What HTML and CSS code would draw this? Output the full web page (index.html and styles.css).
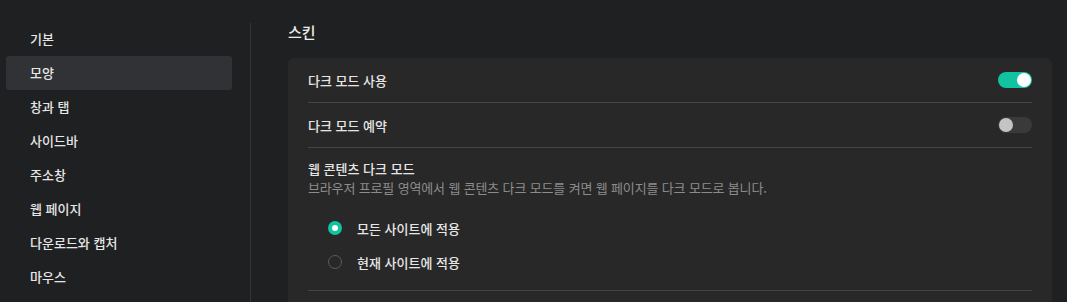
FILE: index.html
```html
<!DOCTYPE html>
<html lang="ko">
<head>
<meta charset="utf-8">
<link rel="stylesheet" href="styles.css">
</head>
<body>
<div class="app">
  <nav class="sidebar">
    <div class="nav-item">기본</div>
    <div class="nav-item active">모양</div>
    <div class="nav-item">창과 탭</div>
    <div class="nav-item">사이드바</div>
    <div class="nav-item">주소창</div>
    <div class="nav-item">웹 페이지</div>
    <div class="nav-item">다운로드와 캡처</div>
    <div class="nav-item">마우스</div>
  </nav>
  <main class="main">
    <h2 class="section-title">스킨</h2>
    <div class="card">
      <div class="row">
        <span class="row-label">다크 모드 사용</span>
        <span class="toggle on"><span class="knob"></span></span>
      </div>
      <div class="row">
        <span class="row-label">다크 모드 예약</span>
        <span class="toggle"><span class="knob"></span></span>
      </div>
      <div class="block">
        <div class="row-label">웹 콘텐츠 다크 모드</div>
        <div class="desc">브라우저 프로필 영역에서 웹 콘텐츠 다크 모드를 켜면 웹 페이지를 다크 모드로 봅니다.</div>
        <div class="radios">
          <div class="radio-row"><span class="radio checked"></span><span class="radio-label">모든 사이트에 적용</span></div>
          <div class="radio-row"><span class="radio"></span><span class="radio-label">현재 사이트에 적용</span></div>
        </div>
      </div>
      <div class="row last"></div>
    </div>
  </main>
</div>
</body>
</html>
```

FILE: styles.css
```css
html, body {
  margin: 0;
  padding: 0;
  background: #1f2022;
  height: 100%;
  overflow: hidden;
}
body {
  font-family: "Noto Sans CJK KR", "Noto Sans", sans-serif;
  color: #e6e6e6;
  font-size: 13px;
}
.app {
  display: flex;
  height: 302px;
  overflow: hidden;
}
.sidebar {
  width: 250px;
  flex: none;
  box-sizing: border-box;
  padding: 22px 18px 0 6px;
  display: flex;
  flex-direction: column;
}
.nav-item {
  height: 34px;
  line-height: 33px;
  padding-left: 24px;
  border-radius: 3px;
  font-weight: 500;
  color: #e6e6e6;
  flex: none;
}
.nav-item.active {
  background: #313235;
}
.main {
  flex: 1;
  margin-top: 23px;
  border-left: 1px solid #333437;
  padding: 0 15px 0 37px;
  display: flex;
  flex-direction: column;
  min-height: 0;
}
.section-title {
  margin: 0;
  font-size: 15px;
  font-weight: 500;
  line-height: 18px;
  height: 35px;
  flex: none;
  color: #ececec;
}
.card {
  background: #282828;
  border-radius: 6px 6px 0 0;
  padding: 0 20px;
  flex: none;
  height: 300px;
}
.row {
  height: 44px;
  display: flex;
  align-items: center;
  justify-content: space-between;
  border-bottom: 1px solid #444;
}
.row-label {
  font-weight: 500;
  color: #e6e6e6;
}
.toggle {
  width: 34px;
  height: 16px;
  border-radius: 8px;
  background: #3a3a3a;
  display: flex;
  align-items: center;
  padding: 0 1px;
  box-sizing: border-box;
}
.toggle .knob {
  width: 14px;
  height: 14px;
  border-radius: 50%;
  background: #c4c4c4;
}
.toggle.on {
  background: #13c2a0;
  justify-content: flex-end;
}
.toggle.on .knob {
  background: #fff;
}
.block {
  padding-top: 12px;
  border-bottom: 1px solid #444;
  height: 143px;
  box-sizing: border-box;
}
.block .row-label {
  line-height: 18px;
}
.desc {
  color: #8c8c8c;
  font-size: 13px;
  line-height: 20px;
  letter-spacing: -0.15px;
}
.radios {
  padding: 13px 0 0 20px;
}
.radio-row {
  display: flex;
  align-items: center;
  height: 34px;
}
.radio {
  width: 14px;
  height: 14px;
  box-sizing: border-box;
  border-radius: 50%;
  border: 1.5px solid #5c5c5c;
  margin-right: 15px;
}
.radio.checked {
  border: 4.5px solid #13c2a0;
  background: #fff;
}
.radio-label {
  font-weight: 500;
}
.row.last {
  border-bottom: none;
}
```
